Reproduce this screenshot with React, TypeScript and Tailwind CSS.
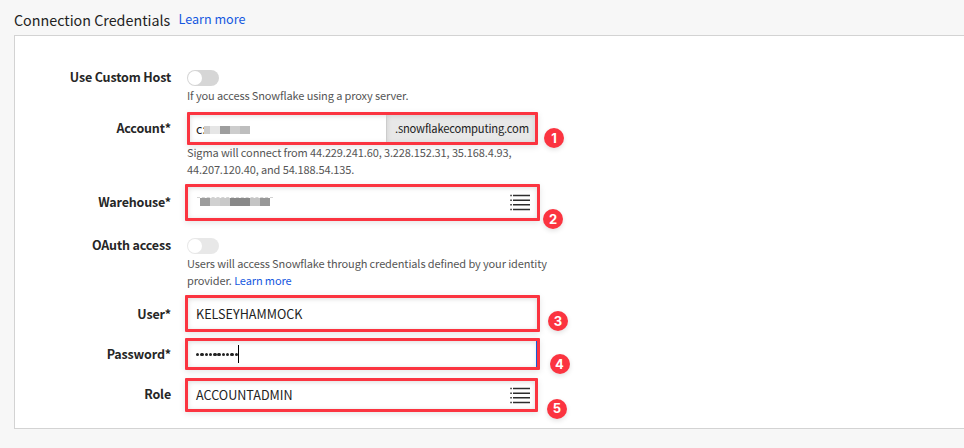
import type { ReactNode } from "react";

const help = "text-[11px] tracking-[-0.12px] leading-[17px] text-[#555] whitespace-nowrap";

function Row({ label, className, labelClass, children }: { label: string; className: string; labelClass: string; children: ReactNode }) {
  return (
    <div className={`flex items-start ${className}`}>
      <div className={`w-[156px] shrink-0 whitespace-nowrap text-right text-[12.5px] font-bold leading-5 tracking-[-0.16px] text-[#262626] ${labelClass}`}>{label}</div>
      {children}
    </div>
  );
}

function Toggle({ color }: { color: string }) {
  return (
    <div className={`h-4 w-8 rounded-full p-px ${color}`}>
      <div className="size-3.5 rounded-full bg-white" />
    </div>
  );
}

function Badge({ n, className }: { n: number; className: string }) {
  return (
    <div className={`absolute flex size-5 items-center justify-center rounded-full bg-[#fb3440] font-['Inter',sans-serif] text-[13px] font-bold leading-none text-white shadow-[0_2px_5px_rgba(0,0,0,0.12)] ${className}`}>{n}</div>
  );
}

function Field({ className, children }: { className: string; children: ReactNode }) {
  return (
    <div className={`flex shrink-0 items-center rounded-[1px] border-3 border-[#fb3440] bg-white text-[12.6px] leading-5 text-[#222] shadow-[0_2px_6px_rgba(0,0,0,0.1),inset_0_1px_5px_rgba(0,0,0,0.14)] ${className}`}>{children}</div>
  );
}

function ListIcon({ className }: { className: string }) {
  return (
    <svg width="20" height="17" viewBox="0 0 20 17" className={`shrink-0 ${className}`} stroke="#2d2d2d" strokeWidth="1.4">
      <path d="M0.3 1.5h1.5M3 1.5h17M0.3 6.2h1.5M3 6.2h17M0.3 10.8h1.5M3 10.8h17M0.3 15.5h1.5M3 15.5h17" />
    </svg>
  );
}

function Mosaic({ colors, className }: { colors: string[]; className: string }) {
  return (
    <div className={`flex h-2 ${className}`}>
      {colors.map((c, i) => <div key={i} className={`h-full w-2.5 ${c}`} />)}
    </div>
  );
}

export default function App() {
  return (
    <div className="relative h-[448px] w-[964px] overflow-hidden bg-[#f7f7f7] font-['Noto_Sans_CJK_SC',sans-serif]">
      <header className="flex h-[35px] items-start pl-3.5">
        <h1 className="mt-2 w-[164.5px] whitespace-nowrap text-[14.3px] leading-6 text-[#222]">Connection Credentials</h1>
        <a className="mt-[9px] whitespace-nowrap text-[12.6px] leading-5 text-[#1558e0]">Learn more</a>
      </header>
      <main className="ml-3.5 h-[394px] border border-r-0 border-[#d3d3d3] bg-white pt-[34px]">
        <Row label="Use Custom Host" className="h-[42px]" labelClass="-mt-[3px]">
          <div className="ml-4">
            <Toggle color="bg-[#d6d6d6]" />
            <p className={`mt-px ${help}`}>If you access Snowflake using a proxy server.</p>
          </div>
        </Row>
        <Row label="Account*" className="h-[72px]" labelClass="mt-[6px]">
          <div className="ml-4">
            <Field className="h-[33px] w-[351px]">
              <span className="ml-1.5 w-[7.5px] whitespace-nowrap">c:</span>
              <Mosaic className="relative mt-0.5" colors={["w-[6.5px]! bg-[#cdcdcd]", "bg-[#e6e6e6]", "bg-[#9e9e9e]", "bg-[#cdcdcd]", "bg-[#bebebe]"]} />
              <span className="ml-auto flex h-full w-[149px] items-center whitespace-nowrap border-l border-[#ccc] bg-[#e8e8e8] pb-0.5 pl-2 text-[11.2px] tracking-[-0.2px] shadow-[inset_0_1px_5px_rgba(0,0,0,0.12)]">.snowflakecomputing.com</span>
            </Field>
            <p className={`-mt-px ${help}`}>Sigma will connect from 44.229.241.60, 3.228.152.31, 35.168.4.93,<br />44.207.120.40, and 54.188.54.135.</p>
          </div>
        </Row>
        <Row label="Warehouse*" className="h-[54px]" labelClass="mt-[8px]">
          <Field className="ml-3.5 h-[37px] w-[355px]">
            <div className="ml-[9px] -mt-0.5">
              <div className="h-px w-[76px] border-t border-dashed border-[#d4d4d4]" />
              <Mosaic className="ml-[3px]" colors={["bg-[#9d9d9d]", "bg-[#d0d0d0]", "bg-[#c9c9c9]", "bg-[#888]", "bg-[#898989]", "bg-[#c4c4c4]", "bg-[#989898]"]} />
            </div>
            <ListIcon className="ml-auto mr-[7px]" />
          </Field>
        </Row>
        <Row label="OAuth access" className="h-[57px]" labelClass="-mt-[3px]">
          <div className="ml-4">
            <Toggle color="bg-[#e8e8e8]" />
            <p className={`mt-px ${help}`}>Users will access Snowflake through credentials defined by your identity<br />provider. <a className="text-[#1558e0]">Learn more</a></p>
          </div>
        </Row>
        <Row label="User*" className="h-[43px]" labelClass="mt-[9px]">
          <Field className="ml-3.5 h-[37px] w-[355px]"><span className="ml-2">KELSEYHAMMOCK</span></Field>
        </Row>
        <Row label="Password*" className="h-10" labelClass="mt-[6px]">
          <Field className="ml-3.5 h-8 w-[355px]">
            <div className="ml-2 mt-px flex gap-[0.9px]">
              {Array.from({ length: 10 }, (_, i) => <span key={i} className="size-[3.4px] rounded-full bg-[#222]" />)}
            </div>
            <span className="h-[18px] w-px bg-black" />
            <span className="ml-auto h-full w-px bg-[#1558d6]" />
          </Field>
        </Row>
        <Row label="Role" className="h-[34px]" labelClass="mt-[6px]">
          <Field className="ml-3.5 h-[34px] w-[353px]">
            <span className="ml-2 -mt-px">ACCOUNTADMIN</span>
            <ListIcon className="ml-auto mr-[5px]" />
          </Field>
        </Row>
      </main>
      <Badge n={1} className="left-[544px] top-[128px]" />
      <Badge n={2} className="left-[543px] top-[209px]" />
      <Badge n={3} className="left-[548px] top-[311px]" />
      <Badge n={4} className="left-[549.5px] top-[354px]" />
      <Badge n={5} className="left-[547px] top-[398.5px]" />
    </div>
  );
}
